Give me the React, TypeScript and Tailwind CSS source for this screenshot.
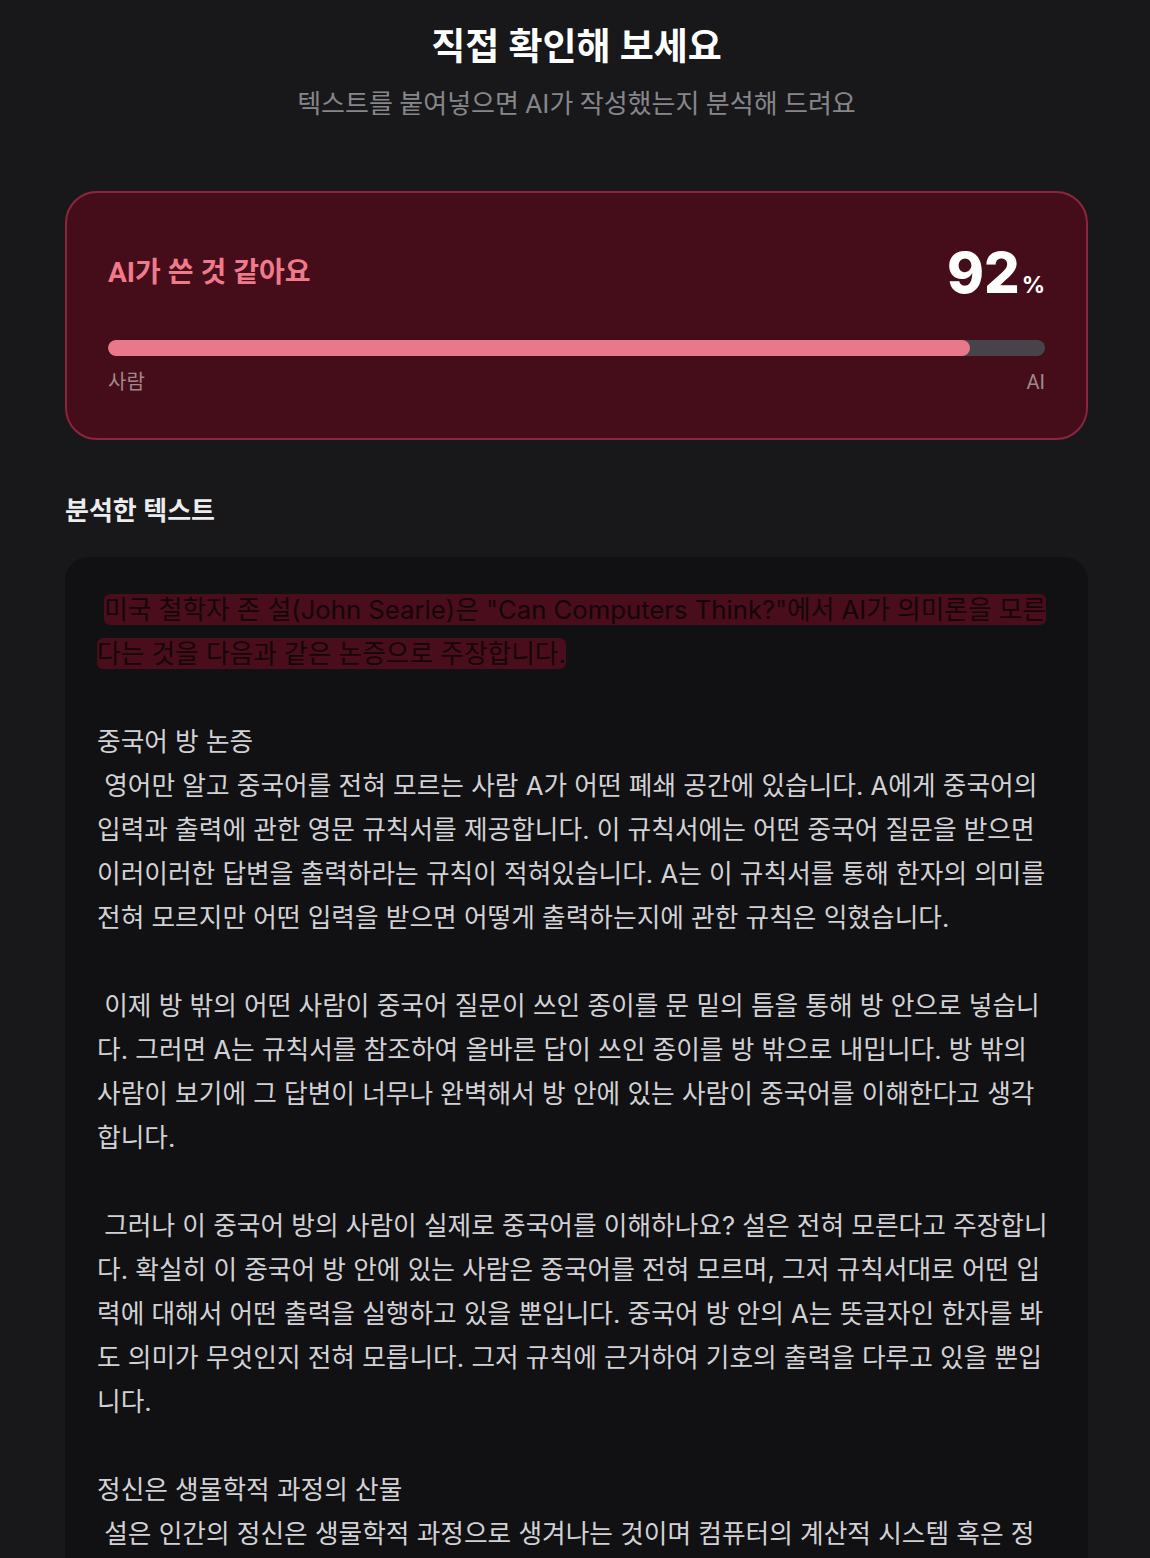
import React from 'react';

const font = { fontFamily: 'Roboto, "Noto Sans CJK KR", sans-serif' };
const bodyFont = { fontFamily: 'Inter, "Noto Sans CJK KR", sans-serif' };

const paragraphs: { title?: string; text: string }[] = [
  {
    title: '중국어 방 논증',
    text: ' 영어만 알고 중국어를 전혀 모르는 사람 A가 어떤 폐쇄 공간에 있습니다. A에게 중국어의 입력과 출력에 관한 영문 규칙서를 제공합니다. 이 규칙서에는 어떤 중국어 질문을 받으면 이러이러한 답변을 출력하라는 규칙이 적혀있습니다. A는 이 규칙서를 통해 한자의 의미를 전혀 모르지만 어떤 입력을 받으면 어떻게 출력하는지에 관한 규칙은 익혔습니다.',
  },
  {
    text: ' 이제 방 밖의 어떤 사람이 중국어 질문이 쓰인 종이를 문 밑의 틈을 통해 방 안으로 넣습니다. 그러면 A는 규칙서를 참조하여 올바른 답이 쓰인 종이를 방 밖으로 내밉니다. 방 밖의 사람이 보기에 그 답변이 너무나 완벽해서 방 안에 있는 사람이 중국어를 이해한다고 생각합니다.',
  },
  {
    text: ' 그러나 이 중국어 방의 사람이 실제로 중국어를 이해하나요? 설은 전혀 모른다고 주장합니다. 확실히 이 중국어 방 안에 있는 사람은 중국어를 전혀 모르며, 그저 규칙서대로 어떤 입력에 대해서 어떤 출력을 실행하고 있을 뿐입니다. 중국어 방 안의 A는 뜻글자인 한자를 봐도 의미가 무엇인지 전혀 모릅니다. 그저 규칙에 근거하여 기호의 출력을 다루고 있을 뿐입니다.',
  },
  {
    title: '정신은 생물학적 과정의 산물',
    text: ' 설은 인간의 정신은 생물학적 과정으로 생겨나는 것이며 컴퓨터의 계산적 시스템 혹은 정보 처리 과정으로는 결코 만들어질 수 없다고 주장합니다. 뇌가 정신을 만들어 내는 방식은 물리적이고 화학적인 인과 관계에 기반하고 있기 때문입니다.',
  },
];

export default function App() {
  const score = 92;

  return (
    <div className="min-h-screen bg-[#18181b] pt-[25px] pb-16" style={font}>
      <div className="ml-[65px] w-[1023px]">
        <h1 className="text-center text-[37px] font-bold leading-[46px] text-white">직접 확인해 보세요</h1>
        <p className="mt-[16px] text-center text-[26px] leading-[34px] text-[#86868b]">
          텍스트를 붙여넣으면 AI가 작성했는지 분석해 드려요
        </p>

        <div className="mt-[70px] rounded-[32px] border-2 border-[#8c2540] bg-[#450d19] px-[41px] pt-[50px] pb-[43px]">
          <div className="flex h-[60px] items-center justify-between">
            <div className="text-[28px] font-bold leading-[40px] text-[#ef7a8c]">AI가 쓴 것 같아요</div>
            <div className="flex items-baseline text-white" style={{ fontFamily: 'Inter, sans-serif' }}>
              <span className="text-[56px] font-extrabold leading-[60px]">{score}</span>
              <span className="ml-[2px] text-[23px] font-bold">%</span>
            </div>
          </div>
          <div className="mt-[37px] h-[16px] w-full overflow-hidden rounded-full bg-[#46434b]">
            <div className="h-full rounded-full bg-[#e8788a]" style={{ width: `${score}%` }} />
          </div>
          <div className="mt-[13px] flex justify-between text-[20px] leading-[26px] text-[#a0878e]">
            <span>사람</span>
            <span>AI</span>
          </div>
        </div>

        <h2 className="mt-[53px] text-[26px] font-bold leading-[36px] text-[#ececef]">분석한 텍스트</h2>

        <div
          className="mt-[28px] rounded-[24px] bg-[#111113] px-[32px] pt-[31px] pb-10 text-[25.7px] leading-[44px] text-[#d2d2d6] break-all whitespace-pre-wrap"
          style={bodyFont}
        >
          <p>
            {' '}
            <span className="rounded-[6px] bg-[#4a0d1c] text-[#140608] [box-decoration-break:clone]">
              미국 철학자 존 설(John Searle)은 "Can Computers Think?"에서 AI가 의미론을 모른다는 것을 다음과 같은 논증으로 주장합니다.
            </span>
          </p>
          {paragraphs.map((p, i) => (
            <div key={i} className="mt-[44px]">
              {p.title && <p>{p.title}</p>}
              <p>{p.text}</p>
            </div>
          ))}
        </div>
      </div>
    </div>
  );
}
